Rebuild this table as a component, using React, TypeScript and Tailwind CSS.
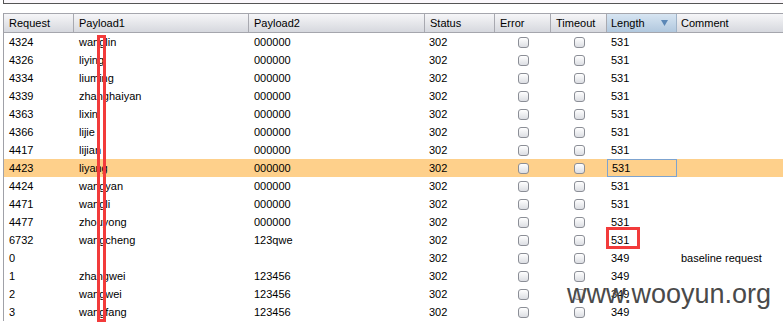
import React from 'react'

type Row = {
  req: string
  p1: string
  p2: string
  status: string
  len: string
  comment?: string
}

const rows: Row[] = [
  { req: '4324', p1: 'wanglin', p2: '000000', status: '302', len: '531' },
  { req: '4326', p1: 'liying', p2: '000000', status: '302', len: '531' },
  { req: '4334', p1: 'liuming', p2: '000000', status: '302', len: '531' },
  { req: '4339', p1: 'zhanghaiyan', p2: '000000', status: '302', len: '531' },
  { req: '4363', p1: 'lixin', p2: '000000', status: '302', len: '531' },
  { req: '4366', p1: 'lijie', p2: '000000', status: '302', len: '531' },
  { req: '4417', p1: 'lijian', p2: '000000', status: '302', len: '531' },
  { req: '4423', p1: 'liyang', p2: '000000', status: '302', len: '531' },
  { req: '4424', p1: 'wangyan', p2: '000000', status: '302', len: '531' },
  { req: '4471', p1: 'wangli', p2: '000000', status: '302', len: '531' },
  { req: '4477', p1: 'zhouyong', p2: '000000', status: '302', len: '531' },
  { req: '6732', p1: 'wangcheng', p2: '123qwe', status: '302', len: '531' },
  { req: '0', p1: '', p2: '', status: '302', len: '349', comment: 'baseline request' },
  { req: '1', p1: 'zhangwei', p2: '123456', status: '302', len: '349' },
  { req: '2', p1: 'wangwei', p2: '123456', status: '302', len: '349' },
  { req: '3', p1: 'wangfang', p2: '123456', status: '302', len: '349' },
]

function Checkbox() {
  return (
    <span className="block h-[11px] w-[11px] rounded-[3px] border border-[#8b8e96] bg-gradient-to-b from-white to-[#dcdee3]" />
  )
}

function HeadCell({ w, children, sorted }: { w: string; children: React.ReactNode; sorted?: boolean }) {
  return (
    <div
      className={
        sorted
          ? `${w} flex shrink-0 items-center justify-between border-r border-[#9fb3c8] bg-gradient-to-b from-[#d7e5f2] to-[#b1c8de] pl-[4px] pr-[8px]`
          : `${w} flex shrink-0 items-center border-r border-[#a8a9b0] bg-gradient-to-b from-[#f6f6f8] to-[#d6d8de] pl-[5px]`
      }
    >
      <span>{children}</span>
      {sorted && (
        <svg width="7" height="6" viewBox="0 0 7 6">
          <path d="M0 0 L7 0 L3.5 6 Z" fill="#5b87b6" />
        </svg>
      )}
    </div>
  )
}

export default function App() {
  return (
    <div
      className="relative h-[325px] w-[783px] overflow-hidden bg-white text-[11px] text-black"
      style={{ fontFamily: '"Liberation Sans", Arial, sans-serif' }}
    >
      <div className="ml-[3px] h-[4px] border-b border-l border-[#555] bg-[#fbf8fc]" />

      <div className="ml-[3px] mt-[9px] border-l border-[#a0a1a8]">
        <div className="flex h-[20px] border-y border-[#a5a6ad] bg-[#dadce1]">
          <HeadCell w="w-[70px]">Request</HeadCell>
          <HeadCell w="w-[175px]">Payload1</HeadCell>
          <HeadCell w="w-[176px]">Payload2</HeadCell>
          <HeadCell w="w-[70px]">Status</HeadCell>
          <HeadCell w="w-[56px]">Error</HeadCell>
          <HeadCell w="w-[56px]">Timeout</HeadCell>
          <HeadCell w="w-[70px]" sorted>
            Length
          </HeadCell>
          <div className="flex flex-1 items-center bg-gradient-to-b from-[#f6f6f8] to-[#d6d8de] pl-[4px]">Comment</div>
        </div>

        {rows.map((r, i) => {
          const selected = r.req === '4423'
          return (
            <div key={i} className={`flex h-[18px] items-center ${selected ? 'bg-[#fed08b]' : ''}`}>
              <div className="w-[70px] shrink-0 pl-[5px]">{r.req}</div>
              <div className="w-[175px] shrink-0 pl-[5px]">{r.p1}</div>
              <div className="w-[176px] shrink-0 pl-[5px]">{r.p2}</div>
              <div className="w-[70px] shrink-0 pl-[4px]">{r.status}</div>
              <div className="flex w-[56px] shrink-0 justify-center">
                <Checkbox />
              </div>
              <div className="flex w-[56px] shrink-0 justify-center">
                <Checkbox />
              </div>
              <div
                className={`flex h-full w-[70px] shrink-0 items-center pl-[4px] ${
                  selected ? 'border border-[#7da3cf] pl-[3px]' : ''
                }`}
              >
                {r.len}
              </div>
              <div className="flex-1 pl-[4px]">{r.comment}</div>
            </div>
          )
        })}
      </div>

      <div className="absolute left-[97px] top-[35px] h-[287px] w-[9px] border-[3px] border-[#f23b3b]" />
      <div className="absolute left-[606px] top-[227px] h-[22px] w-[34px] border-[3px] border-[#f23b3b]" />

      <div className="absolute left-[567px] top-[281px] text-[27px] leading-none text-[#4a4a4a]">
        www.wooyun.org
      </div>
    </div>
  )
}
